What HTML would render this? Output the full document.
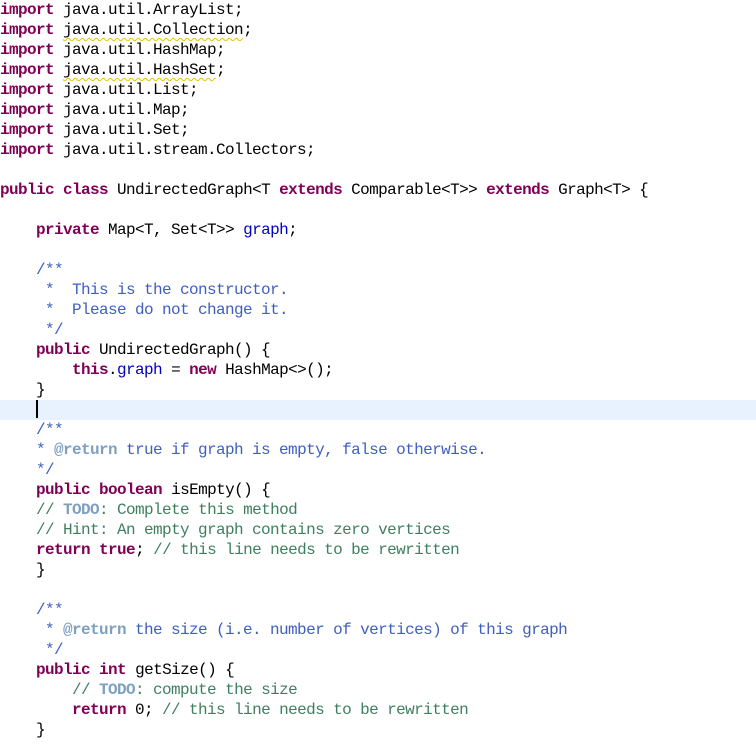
<!DOCTYPE html>
<html><head><style>
body{margin:0;background:#fff;width:756px;height:753px;overflow:hidden}
pre{margin:0;font-family:"Liberation Mono",monospace;font-size:16px;letter-spacing:-0.6px;line-height:20px;color:#000;position:relative;top:0}
.k{color:#7f0055;font-weight:bold}
.f{color:#0000c0}
.j{color:#3f5fbf}
.t{color:#7f9fbf;font-weight:bold}
.c{color:#3f7f5f}
.w{text-decoration:underline wavy #e8c000;text-decoration-thickness:1px;text-underline-offset:3px}
.hl{position:absolute;left:0;top:400px;width:756px;height:20px;background:#e8f2fe;z-index:-1}
.cur{position:absolute;left:36px;top:400px;width:2px;height:18px;background:#000}
</style></head><body>
<div class="hl"></div><div class="cur"></div>
<pre><span class="k">import</span> java.util.ArrayList;
<span class="k">import</span> <span class="w">java.util.Collection</span>;
<span class="k">import</span> java.util.HashMap;
<span class="k">import</span> <span class="w">java.util.HashSet</span>;
<span class="k">import</span> java.util.List;
<span class="k">import</span> java.util.Map;
<span class="k">import</span> java.util.Set;
<span class="k">import</span> java.util.stream.Collectors;

<span class="k">public</span> <span class="k">class</span> UndirectedGraph&lt;T <span class="k">extends</span> Comparable&lt;T&gt;&gt; <span class="k">extends</span> Graph&lt;T&gt; {

    <span class="k">private</span> Map&lt;T, Set&lt;T&gt;&gt; <span class="f">graph</span>;

    <span class="j">/**</span>
<span class="j">     *  This is the constructor.</span>
<span class="j">     *  Please do not change it.</span>
<span class="j">     */</span>
    <span class="k">public</span> UndirectedGraph() {
        <span class="k">this</span>.<span class="f">graph</span> = <span class="k">new</span> HashMap&lt;&gt;();
    }

    <span class="j">/**</span>
<span class="j">    * </span><span class="t">@return</span><span class="j"> true if graph is empty, false otherwise.</span>
<span class="j">    */</span>
    <span class="k">public</span> <span class="k">boolean</span> isEmpty() {
    <span class="c">// </span><span class="t">TODO</span><span class="c">: Complete this method</span>
    <span class="c">// Hint: An empty graph contains zero vertices</span>
    <span class="k">return</span> <span class="k">true</span>; <span class="c">// this line needs to be rewritten</span>
    }

    <span class="j">/**</span>
<span class="j">     * </span><span class="t">@return</span><span class="j"> the size (i.e. number of vertices) of this graph</span>
<span class="j">     */</span>
    <span class="k">public</span> <span class="k">int</span> getSize() {
        <span class="c">// </span><span class="t">TODO</span><span class="c">: compute the size</span>
        <span class="k">return</span> 0; <span class="c">// this line needs to be rewritten</span>
    }
</pre>
</body></html>
